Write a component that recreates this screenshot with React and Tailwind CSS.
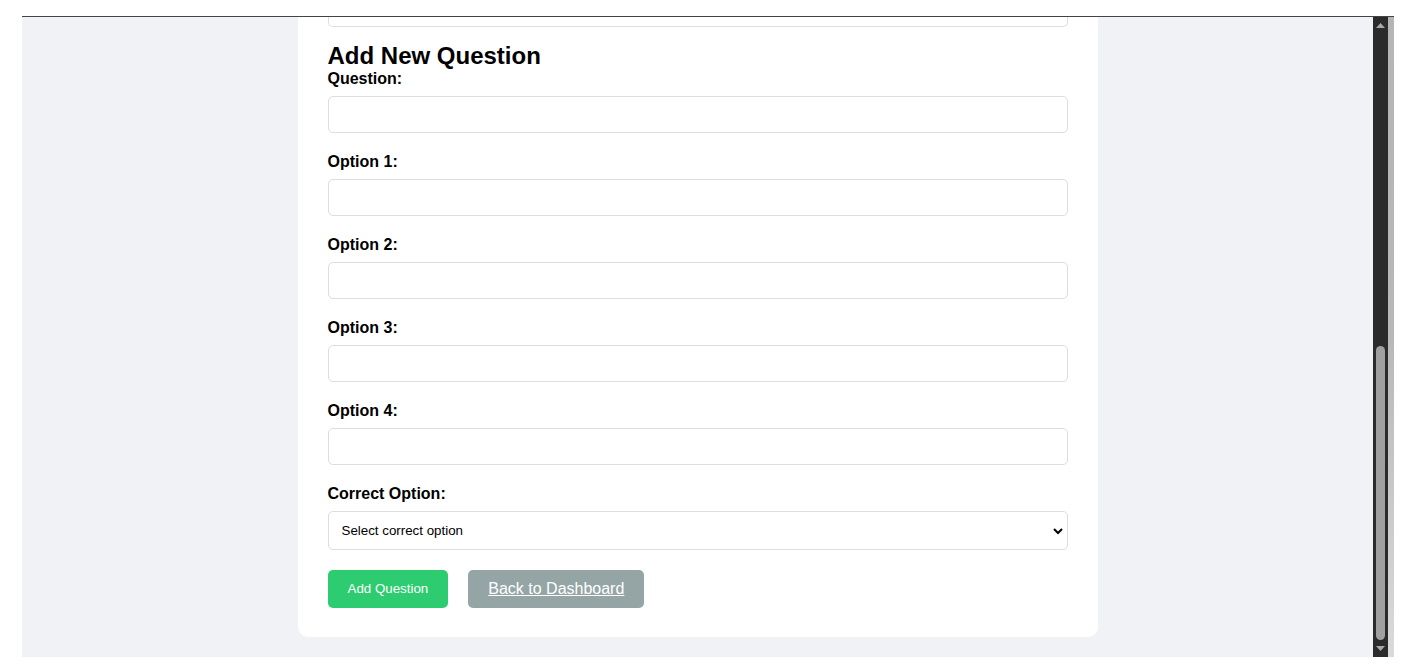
import { useState } from 'react';

const fields = ['Question:', 'Option 1:', 'Option 2:', 'Option 3:', 'Option 4:'];

function Scrollbar() {
  return (
    <div className="flex h-full">
      <div className="w-[15px] h-full bg-[#2b2b2b] flex flex-col items-center pt-[6px] pb-[6px]">
        <svg width="9" height="5" viewBox="0 0 9 5">
          <path d="M0 5 L4.5 0 L9 5 Z" fill="#a8a8a8" />
        </svg>
        <div className="flex-1" />
        <div className="w-[9px] h-[294px] rounded-[5px] bg-[#a0a0a0]" />
        <div className="h-[6px]" />
        <svg width="9" height="5" viewBox="0 0 9 5">
          <path d="M0 0 L9 0 L4.5 5 Z" fill="#a8a8a8" />
        </svg>
      </div>
      <div className="w-[6px] h-full bg-gradient-to-b from-[#b5b5b5] via-[#b8b8b8] to-[#dadada]" />
    </div>
  );
}

function App() {
  const [values, setValues] = useState(['', '', '', '', '']);
  const [correct, setCorrect] = useState('');

  const update = (i, v) => {
    const next = [...values];
    next[i] = v;
    setValues(next);
  };

  return (
    <div className="min-h-screen bg-white pt-4 pl-[22px] font-['Liberation_Sans',Arial,sans-serif]">
      <div className="flex w-[1372px] h-[641px] border-t border-[#444444]">
        <div className="flex-1 h-full bg-[#f0f2f5] flex justify-center overflow-hidden">
          <div className="w-[800px] self-start bg-white rounded-b-[10px] px-[30px] pb-[29px]">
            <div className="h-[10px] border-x border-b border-[#dddddd] rounded-b-[5px]" />

            <h2 className="mt-[15px] text-[24px] leading-[27px] font-bold text-black">
              Add New Question
            </h2>

            {fields.map((label, i) => (
              <div key={label}>
                <label className="block pt-px text-[16px] leading-[18px] font-bold text-black mb-[8px]">
                  {label}
                </label>
                <input
                  type="text"
                  value={values[i]}
                  onChange={(e) => update(i, e.target.value)}
                  className="block w-full h-[37px] px-[10px] border border-[#dddddd] rounded-[5px] text-[16px] mb-[19px] outline-none"
                />
              </div>
            ))}

            <label className="block pt-px text-[16px] leading-[18px] font-bold text-black mb-[8px]">
              Correct Option:
            </label>
            <div className="relative">
              <select
                value={correct}
                onChange={(e) => setCorrect(e.target.value)}
                className="block w-full h-[39px] pl-[13px] pr-[24px] border border-[#dddddd] rounded-[5px] bg-white text-[13.33px] text-black appearance-none outline-none"
              >
                <option value="">Select correct option</option>
                <option value="1">Option 1</option>
                <option value="2">Option 2</option>
                <option value="3">Option 3</option>
                <option value="4">Option 4</option>
              </select>
              <svg
                className="absolute right-[5px] top-1/2 -translate-y-1/2 pointer-events-none"
                width="10"
                height="7"
                viewBox="0 0 10 7"
              >
                <path d="M1 1.5 L5 5.5 L9 1.5" fill="none" stroke="#000" strokeWidth="2" />
              </svg>
            </div>

            <div className="flex gap-5 mt-5">
              <button
                type="button"
                className="h-[38px] px-5 rounded-[5px] bg-[#2ecc71] text-white text-[13.33px]"
              >
                Add Question
              </button>
              <a
                href="#"
                className="h-[38px] px-5 rounded-[5px] bg-[#95a5a6] text-white text-[16px] underline flex items-center"
              >
                Back to Dashboard
              </a>
            </div>
          </div>
        </div>
        <Scrollbar />
      </div>
    </div>
  );
}

export default App;
